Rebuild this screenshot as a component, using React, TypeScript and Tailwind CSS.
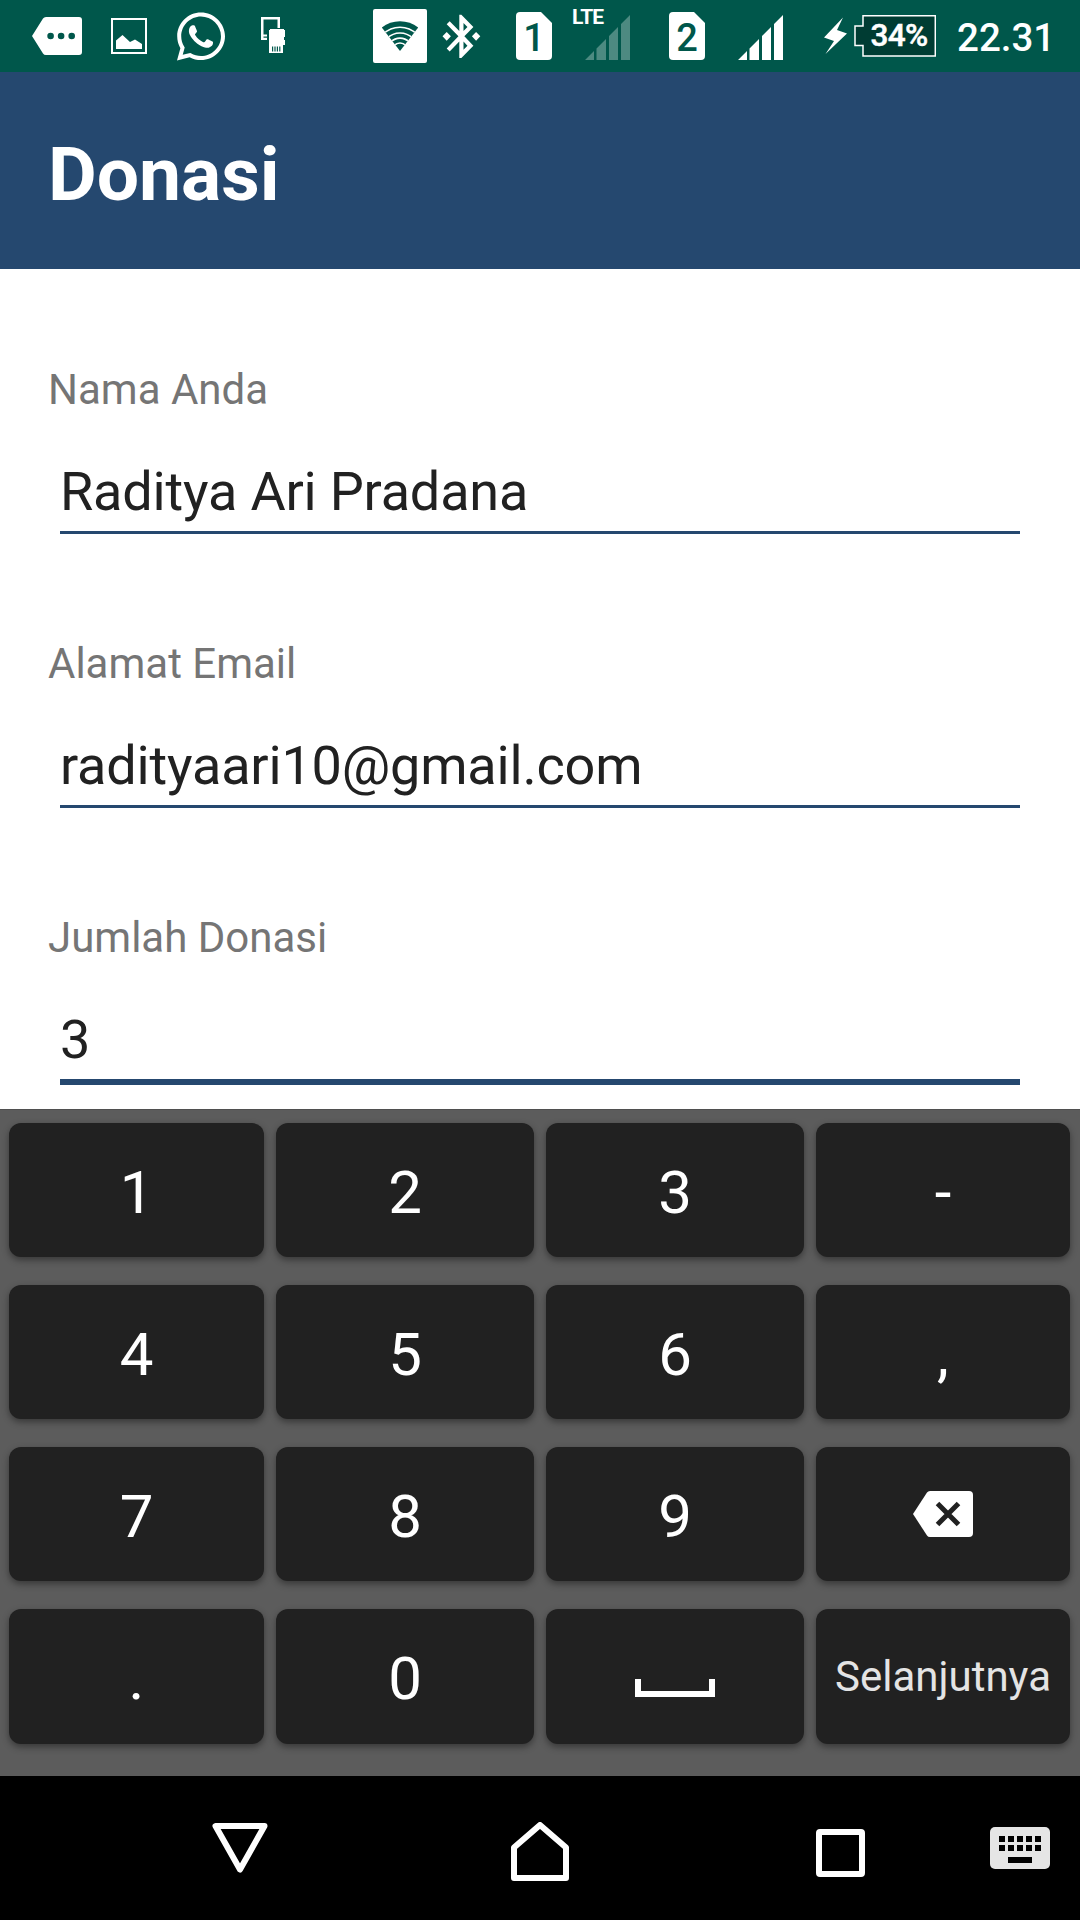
import type { ReactNode } from "react";
import { FaWhatsapp } from "react-icons/fa";

function Glyph({
  x,
  w,
  className,
  children,
}: {
  x: number;
  w: number;
  className: string;
  children: ReactNode;
}) {
  return (
    <svg
      width={w}
      height={72}
      viewBox={`${x} 0 ${w} 72`}
      fill="#fff"
      className={`block shrink-0 ${className}`}
    >
      {children}
    </svg>
  );
}

function Signal({ className }: { className: string }) {
  return (
    <svg width={45} height={72} viewBox="0 0 45 72" fill="#fff" className={`block shrink-0 ${className}`}>
      <path d="M0 60L9 51V60ZM11.5 48.5L21 39V60H11.5ZM24 36L33 27V60H24ZM36 24L45 15V60H36Z" />
    </svg>
  );
}

function Sim({ digit, className }: { digit: string; className: string }) {
  return (
    <div className={`relative h-[72px] w-9 shrink-0 ${className}`}>
      <svg width={36} height={72} viewBox="0 0 36 72" fill="#fff" className="block">
        <path d="M4 12H25L36 23V56Q36 60 32 60H4Q0 60 0 56V16Q0 12 4 12Z" />
      </svg>
      <span className="absolute inset-x-0 top-[18px] text-center text-[38px] leading-[41px] font-medium text-[#00574b]">
        {digit}
      </span>
    </div>
  );
}

function StatusBar() {
  return (
    <div className="flex h-[72px] items-start overflow-hidden bg-[#00574b] text-white">
      <Glyph x={32} w={50} className="ml-8">
        <path
          fillRule="evenodd"
          d="M32 36L43 18.5Q44 17 46 17H79Q82 17 82 20V52Q82 55 79 55H46Q44 55 43 53.5ZM47.3 36a3.3 3.3 0 1 0 6.6 0a3.3 3.3 0 1 0 -6.6 0ZM57.8 36a3.3 3.3 0 1 0 6.6 0a3.3 3.3 0 1 0 -6.6 0ZM68.4 36a3.3 3.3 0 1 0 6.6 0a3.3 3.3 0 1 0 -6.6 0Z"
        />
      </Glyph>
      <Glyph x={111} w={36} className="ml-[29px]">
        <rect x={112} y={19} width={34} height={34} fill="none" stroke="#fff" strokeWidth={2} />
        <path d="M116 49V40.5L122.5 35L130 42L135 39.5L142 44V49Z" />
      </Glyph>
      <FaWhatsapp className="mt-[8.5px] ml-[29.5px] h-[55px] w-[48px] shrink-0" />
      <Glyph x={261} w={24} className="ml-[36.5px]">
        <path d="M261 17H280V28H277.5V19.5H263.5V34.5H267V36.5H263.5V37.8H267V40H261Z" />
        <path
          fillRule="evenodd"
          d="M270 29H284V30H285V37H284V40H285V45H283V53H269V30H270ZM272 46.5V51.5H273.2V46.5ZM274.4 46.5V51.5H275.6V46.5ZM276.8 46.5V51.5H278V46.5ZM279.2 46.5V51.5H280.4V46.5Z"
        />
      </Glyph>
      <Glyph x={373} w={54} className="ml-[88px]">
        <defs>
          <clipPath id="wifi-fan">
            <path d="M400 51L381.8 27.5A30 30 0 0 1 418.2 27.5Z" />
          </clipPath>
        </defs>
        <rect x={373} y={9} width={54} height={54} rx={2} />
        <g clipPath="url(#wifi-fan)" fill="none" stroke="#fff">
          <circle cx={400} cy={51} r={31} fill="#00574b" stroke="none" />
          <circle cx={400} cy={51} r={23.8} strokeWidth={1.5} />
          <circle cx={400} cy={51} r={18} strokeWidth={1.7} />
          <circle cx={400} cy={51} r={12.8} strokeWidth={1.7} />
          <circle cx={400} cy={51} r={8} strokeWidth={1.7} />
        </g>
      </Glyph>
      <Glyph x={442} w={39} className="ml-[15px]">
        <path
          transform="translate(436.2 10.3) scale(2.1 2.17)"
          d="M7 12l-2-2-2 2 2 2 2-2zm10.71-4.29L12 2h-1v7.59L6.41 5 5 6.41 10.59 12 5 17.59 6.41 19 11 14.41V22h1l5.71-5.71-4.3-4.29 4.3-4.29zM13 5.83l1.88 1.88L13 9.59V5.83zm1.88 10.46L13 18.17v-3.76l1.88 1.88zM19 10l-2 2 2 2 2-2-2-2z"
        />
      </Glyph>
      <Sim digit="1" className="ml-[35px]" />
      <div className="relative ml-[33px]">
        <Signal className="opacity-30" />
        <span className="absolute top-[6px] -left-[13px] text-[21px] leading-[22px] font-bold tracking-[-0.9px]">
          LTE
        </span>
      </div>
      <Sim digit="2" className="ml-[39px]" />
      <Signal className="ml-[33px]" />
      <Glyph x={824} w={23} className="ml-[41px]">
        <path d="M843 17.5L824 37.5L834 41L825.5 54L847 33.5L837 30Z" />
      </Glyph>
      <div className="relative ml-[7px] h-[72px] w-[82px] shrink-0">
        <svg width={82} height={72} viewBox="854 0 82 72" className="block">
          <path
            d="M863 15.8H935.3V56H863V45.5H855V26H863Z"
            fill="#003c33"
            stroke="#fff"
            strokeWidth={1.5}
          />
        </svg>
        <span className="absolute top-[20px] left-[16.5px] text-[31.5px] leading-8 font-medium tracking-[-0.7px] [-webkit-text-stroke:0.5px_#fff]">
          34%
        </span>
      </div>
      <span className="mt-[14px] ml-[21px] text-[38.5px] leading-12 font-medium">22.31</span>
    </div>
  );
}

function Field({ label, value, active = false }: { label: string; value: string; active?: boolean }) {
  return (
    <div className="h-[274px] px-12 pt-24">
      <div className="text-[42px] leading-[49px] text-[#757575]">{label}</div>
      <div
        className={`mx-3 mt-[47px] border-[#25486f] pb-2 text-[54px] leading-[62px] tracking-[-0.18px] text-[#212121] ${
          active ? "border-b-6" : "border-b-3"
        }`}
      >
        {value}
      </div>
    </div>
  );
}

const keys: { id: string; face: ReactNode }[] = [
  ..."123-456,789".split("").map((c) => ({ id: c, face: c as ReactNode })),
  {
    id: "backspace",
    face: (
      <svg width={60} height={46} viewBox="0 0 60 46" className="-mt-[5px] block">
        <path
          d="M0 23L14 1.5Q15 0 17 0H56Q60 0 60 4V42Q60 46 56 46H17Q15 46 14 44.5Z"
          fill="#fff"
        />
        <path d="M24.5 12.5L45.5 33.5M45.5 12.5L24.5 33.5" stroke="#212121" strokeWidth={5} />
      </svg>
    ),
  },
  { id: ".", face: "." },
  { id: "0", face: "0" },
  {
    id: "space",
    face: (
      <svg width={80} height={18} viewBox="0 0 80 18" className="mt-[18px] block">
        <path d="M3 0V15H77V0" fill="none" stroke="#fff" strokeWidth={6} />
      </svg>
    ),
  },
  { id: "next", face: <span className="-mt-[5px] text-[42px] text-[#e4e4e4]">Selanjutnya</span> },
];

function Keyboard() {
  return (
    <div className="grid h-[667px] grid-cols-[255px_258px_258px_254px] grid-rows-[134px_134px_134px_135px] gap-x-3 gap-y-7 border-t border-[#4f4f4f] bg-[#5c5c5c] pt-[13px] pl-[9px]">
      {keys.map((k) => (
        <div
          key={k.id}
          className="flex items-center justify-center rounded-xl bg-[#212121] pt-[5px] text-[60px] leading-none text-white shadow-[0_3px_7px_rgba(0,0,0,0.4)]"
        >
          {k.face}
        </div>
      ))}
    </div>
  );
}

function NavBar() {
  return (
    <div className="flex h-36 items-start bg-black">
      <svg width={56} height={50} viewBox="212 1823 56 50" className="mt-[47px] ml-[212px] block">
        <path d="M215.5 1826H264.5L240 1869.5Z" fill="none" stroke="#fff" strokeWidth={6} strokeLinejoin="round" />
      </svg>
      <svg width={58} height={59} viewBox="511 1822 58 59" className="mt-[46px] ml-[243px] block">
        <path
          d="M514 1878V1847.5L540 1825L566 1847.5V1878Z"
          fill="none"
          stroke="#fff"
          strokeWidth={6}
          strokeLinejoin="round"
        />
      </svg>
      <div className="mt-[53px] ml-[247px] h-12 w-[49px] rounded-sm border-6 border-white" />
      <svg width={60} height={42} viewBox="0 0 60 42" className="mt-[51px] ml-[125px] block">
        <rect width={60} height={42} rx={5} fill="#e5e5e5" />
        <path
          d="M9 9h6v6h-6zM18 9h6v6h-6zM27 9h6v6h-6zM36 9h6v6h-6zM45 9h6v6h-6zM9 18h6v6h-6zM18 18h6v6h-6zM27 18h6v6h-6zM36 18h6v6h-6zM45 18h6v6h-6zM18 30h24v6h-24z"
          fill="#000"
        />
      </svg>
    </div>
  );
}

export default function App() {
  return (
    <div className="flex h-[1920px] w-[1080px] flex-col overflow-hidden bg-white font-[Roboto,sans-serif]">
      <StatusBar />
      <header className="h-[197px] bg-[#25486f] px-12 pt-[58px]">
        <h1 className="text-[75px] leading-[88px] font-bold text-white">Donasi</h1>
      </header>
      <main className="h-[840px] overflow-hidden">
        <Field label="Nama Anda" value="Raditya Ari Pradana" />
        <Field label="Alamat Email" value="radityaari10@gmail.com" />
        <Field label="Jumlah Donasi" value="3" active />
      </main>
      <Keyboard />
      <NavBar />
    </div>
  );
}
